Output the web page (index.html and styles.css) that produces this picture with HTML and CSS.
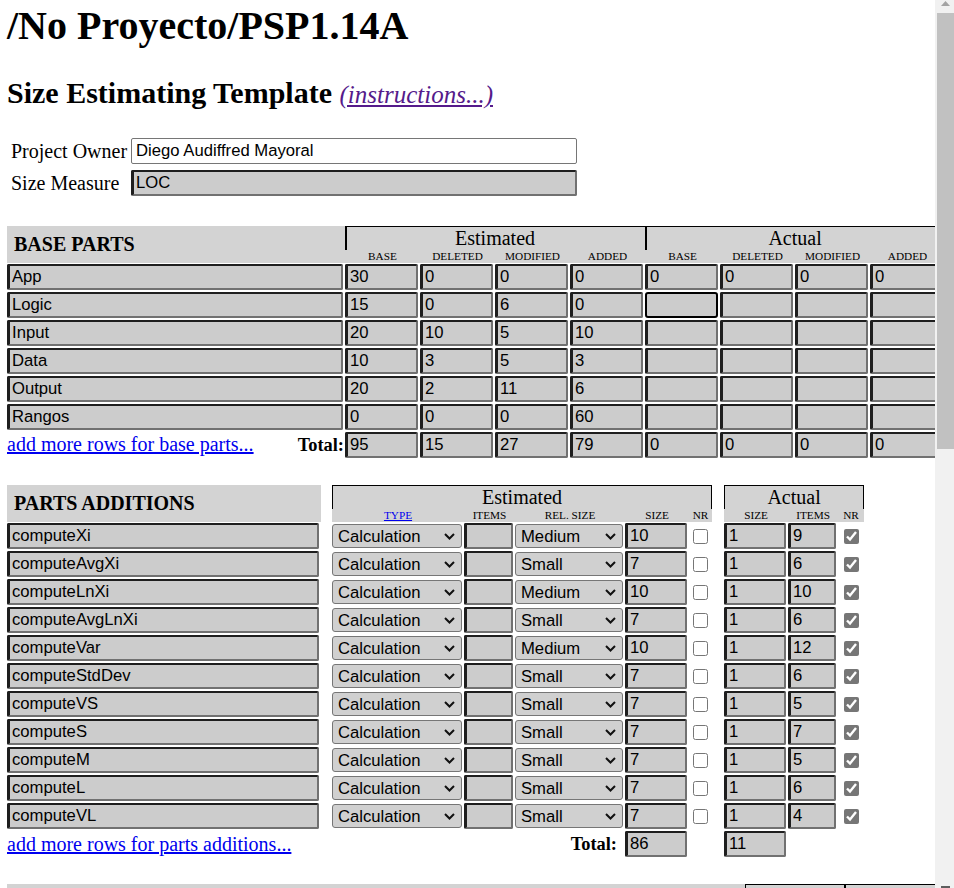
FILE: index.html
```html
<!DOCTYPE html>
<html lang="es">
<head>
<meta charset="utf-8">
<title>Size Estimating Template</title>
<link rel="stylesheet" href="styles.css">
</head>
<body>
<div class="window">
<main class="page">
<h1 class="path">/No Proyecto/PSP1.14A</h1>
<h2 class="tpl">Size Estimating Template <a class="instr" href="#">(instructions...)</a></h2>

<div class="owner-form">
  <label for="owner">Project Owner</label>
  <input id="owner" class="fld edit" type="text" value="Diego Audiffred Mayoral">
  <label for="measure">Size Measure</label>
  <input id="measure" class="fld ro" type="text" value="LOC" readonly>
</div>

<table class="sheet base">
  <colgroup><col class="w-name"><col class="w-num" span="8"></colgroup>
  <thead>
    <tr class="grp-row"><th class="sect" rowspan="2"><span>BASE PARTS</span></th><th class="grp" colspan="4">Estimated</th><th class="grp" colspan="4">Actual</th></tr>
    <tr class="sub"><th>BASE</th><th>DELETED</th><th>MODIFIED</th><th>ADDED</th><th>BASE</th><th>DELETED</th><th>MODIFIED</th><th>ADDED</th></tr>
  </thead>
  <tbody>
    <tr><td><input class="fld ro" value="App" readonly></td><td><input class="fld ro" value="30" readonly></td><td><input class="fld ro" value="0" readonly></td><td><input class="fld ro" value="0" readonly></td><td><input class="fld ro" value="0" readonly></td><td><input class="fld ro" value="0" readonly></td><td><input class="fld ro" value="0" readonly></td><td><input class="fld ro" value="0" readonly></td><td><input class="fld ro" value="0" readonly></td></tr>
    <tr><td><input class="fld ro" value="Logic" readonly></td><td><input class="fld ro" value="15" readonly></td><td><input class="fld ro" value="0" readonly></td><td><input class="fld ro" value="6" readonly></td><td><input class="fld ro" value="0" readonly></td><td><input class="fld ro focus" value="" readonly></td><td><input class="fld ro" value="" readonly></td><td><input class="fld ro" value="" readonly></td><td><input class="fld ro" value="" readonly></td></tr>
    <tr><td><input class="fld ro" value="Input" readonly></td><td><input class="fld ro" value="20" readonly></td><td><input class="fld ro" value="10" readonly></td><td><input class="fld ro" value="5" readonly></td><td><input class="fld ro" value="10" readonly></td><td><input class="fld ro" value="" readonly></td><td><input class="fld ro" value="" readonly></td><td><input class="fld ro" value="" readonly></td><td><input class="fld ro" value="" readonly></td></tr>
    <tr><td><input class="fld ro" value="Data" readonly></td><td><input class="fld ro" value="10" readonly></td><td><input class="fld ro" value="3" readonly></td><td><input class="fld ro" value="5" readonly></td><td><input class="fld ro" value="3" readonly></td><td><input class="fld ro" value="" readonly></td><td><input class="fld ro" value="" readonly></td><td><input class="fld ro" value="" readonly></td><td><input class="fld ro" value="" readonly></td></tr>
    <tr><td><input class="fld ro" value="Output" readonly></td><td><input class="fld ro" value="20" readonly></td><td><input class="fld ro" value="2" readonly></td><td><input class="fld ro" value="11" readonly></td><td><input class="fld ro" value="6" readonly></td><td><input class="fld ro" value="" readonly></td><td><input class="fld ro" value="" readonly></td><td><input class="fld ro" value="" readonly></td><td><input class="fld ro" value="" readonly></td></tr>
    <tr><td><input class="fld ro" value="Rangos" readonly></td><td><input class="fld ro" value="0" readonly></td><td><input class="fld ro" value="0" readonly></td><td><input class="fld ro" value="0" readonly></td><td><input class="fld ro" value="60" readonly></td><td><input class="fld ro" value="" readonly></td><td><input class="fld ro" value="" readonly></td><td><input class="fld ro" value="" readonly></td><td><input class="fld ro" value="" readonly></td></tr>
    <tr><td><div class="tot"><a class="add" href="#">add more rows for base parts...</a><b class="total">Total:</b></div></td><td><input class="fld ro" value="95" readonly></td><td><input class="fld ro" value="15" readonly></td><td><input class="fld ro" value="27" readonly></td><td><input class="fld ro" value="79" readonly></td><td><input class="fld ro" value="0" readonly></td><td><input class="fld ro" value="0" readonly></td><td><input class="fld ro" value="0" readonly></td><td><input class="fld ro" value="0" readonly></td></tr>
  </tbody>
</table>

<table class="sheet adds">
  <colgroup><col class="w-pname"><col class="w-gap"><col class="w-type"><col class="w-items"><col class="w-rel"><col class="w-size"><col class="w-nr"><col class="w-gap2"><col class="w-asize"><col class="w-aitems"><col class="w-anr"></colgroup>
  <thead>
    <tr class="grp-row"><th class="sect" rowspan="2"><span>PARTS ADDITIONS</span></th><th class="gap" rowspan="2"></th><th class="grp thin" colspan="5">Estimated</th><th class="gap" rowspan="2"></th><th class="grp thin" colspan="3">Actual</th></tr>
    <tr class="sub"><th><a class="typelink" href="#">TYPE</a></th><th>ITEMS</th><th>REL. SIZE</th><th>SIZE</th><th>NR</th><th>SIZE</th><th>ITEMS</th><th>NR</th></tr>
  </thead>
  <tbody>
    <tr><td><input class="fld ro" value="computeXi" readonly></td><td></td><td><div class="pick"><select><option selected>Calculation</option><option>Data</option><option>I/O</option><option>Logic</option></select><svg class="chev" viewBox="0 0 11 7" width="11" height="7"><path d="M1 1l4.5 4.5L10 1"/></svg></div></td><td><input class="fld ro" value="" readonly></td><td><div class="pick"><select><option>Small</option><option selected>Medium</option><option>Large</option></select><svg class="chev" viewBox="0 0 11 7" width="11" height="7"><path d="M1 1l4.5 4.5L10 1"/></svg></div></td><td><input class="fld ro" value="10" readonly></td><td><input class="nr" type="checkbox"></td><td></td><td><input class="fld ro" value="1" readonly></td><td><input class="fld ro" value="9" readonly></td><td><input class="nr" type="checkbox" checked></td></tr>
    <tr><td><input class="fld ro" value="computeAvgXi" readonly></td><td></td><td><div class="pick"><select><option selected>Calculation</option><option>Data</option><option>I/O</option><option>Logic</option></select><svg class="chev" viewBox="0 0 11 7" width="11" height="7"><path d="M1 1l4.5 4.5L10 1"/></svg></div></td><td><input class="fld ro" value="" readonly></td><td><div class="pick"><select><option selected>Small</option><option>Medium</option><option>Large</option></select><svg class="chev" viewBox="0 0 11 7" width="11" height="7"><path d="M1 1l4.5 4.5L10 1"/></svg></div></td><td><input class="fld ro" value="7" readonly></td><td><input class="nr" type="checkbox"></td><td></td><td><input class="fld ro" value="1" readonly></td><td><input class="fld ro" value="6" readonly></td><td><input class="nr" type="checkbox" checked></td></tr>
    <tr><td><input class="fld ro" value="computeLnXi" readonly></td><td></td><td><div class="pick"><select><option selected>Calculation</option><option>Data</option><option>I/O</option><option>Logic</option></select><svg class="chev" viewBox="0 0 11 7" width="11" height="7"><path d="M1 1l4.5 4.5L10 1"/></svg></div></td><td><input class="fld ro" value="" readonly></td><td><div class="pick"><select><option>Small</option><option selected>Medium</option><option>Large</option></select><svg class="chev" viewBox="0 0 11 7" width="11" height="7"><path d="M1 1l4.5 4.5L10 1"/></svg></div></td><td><input class="fld ro" value="10" readonly></td><td><input class="nr" type="checkbox"></td><td></td><td><input class="fld ro" value="1" readonly></td><td><input class="fld ro" value="10" readonly></td><td><input class="nr" type="checkbox" checked></td></tr>
    <tr><td><input class="fld ro" value="computeAvgLnXi" readonly></td><td></td><td><div class="pick"><select><option selected>Calculation</option><option>Data</option><option>I/O</option><option>Logic</option></select><svg class="chev" viewBox="0 0 11 7" width="11" height="7"><path d="M1 1l4.5 4.5L10 1"/></svg></div></td><td><input class="fld ro" value="" readonly></td><td><div class="pick"><select><option selected>Small</option><option>Medium</option><option>Large</option></select><svg class="chev" viewBox="0 0 11 7" width="11" height="7"><path d="M1 1l4.5 4.5L10 1"/></svg></div></td><td><input class="fld ro" value="7" readonly></td><td><input class="nr" type="checkbox"></td><td></td><td><input class="fld ro" value="1" readonly></td><td><input class="fld ro" value="6" readonly></td><td><input class="nr" type="checkbox" checked></td></tr>
    <tr><td><input class="fld ro" value="computeVar" readonly></td><td></td><td><div class="pick"><select><option selected>Calculation</option><option>Data</option><option>I/O</option><option>Logic</option></select><svg class="chev" viewBox="0 0 11 7" width="11" height="7"><path d="M1 1l4.5 4.5L10 1"/></svg></div></td><td><input class="fld ro" value="" readonly></td><td><div class="pick"><select><option>Small</option><option selected>Medium</option><option>Large</option></select><svg class="chev" viewBox="0 0 11 7" width="11" height="7"><path d="M1 1l4.5 4.5L10 1"/></svg></div></td><td><input class="fld ro" value="10" readonly></td><td><input class="nr" type="checkbox"></td><td></td><td><input class="fld ro" value="1" readonly></td><td><input class="fld ro" value="12" readonly></td><td><input class="nr" type="checkbox" checked></td></tr>
    <tr><td><input class="fld ro" value="computeStdDev" readonly></td><td></td><td><div class="pick"><select><option selected>Calculation</option><option>Data</option><option>I/O</option><option>Logic</option></select><svg class="chev" viewBox="0 0 11 7" width="11" height="7"><path d="M1 1l4.5 4.5L10 1"/></svg></div></td><td><input class="fld ro" value="" readonly></td><td><div class="pick"><select><option selected>Small</option><option>Medium</option><option>Large</option></select><svg class="chev" viewBox="0 0 11 7" width="11" height="7"><path d="M1 1l4.5 4.5L10 1"/></svg></div></td><td><input class="fld ro" value="7" readonly></td><td><input class="nr" type="checkbox"></td><td></td><td><input class="fld ro" value="1" readonly></td><td><input class="fld ro" value="6" readonly></td><td><input class="nr" type="checkbox" checked></td></tr>
    <tr><td><input class="fld ro" value="computeVS" readonly></td><td></td><td><div class="pick"><select><option selected>Calculation</option><option>Data</option><option>I/O</option><option>Logic</option></select><svg class="chev" viewBox="0 0 11 7" width="11" height="7"><path d="M1 1l4.5 4.5L10 1"/></svg></div></td><td><input class="fld ro" value="" readonly></td><td><div class="pick"><select><option selected>Small</option><option>Medium</option><option>Large</option></select><svg class="chev" viewBox="0 0 11 7" width="11" height="7"><path d="M1 1l4.5 4.5L10 1"/></svg></div></td><td><input class="fld ro" value="7" readonly></td><td><input class="nr" type="checkbox"></td><td></td><td><input class="fld ro" value="1" readonly></td><td><input class="fld ro" value="5" readonly></td><td><input class="nr" type="checkbox" checked></td></tr>
    <tr><td><input class="fld ro" value="computeS" readonly></td><td></td><td><div class="pick"><select><option selected>Calculation</option><option>Data</option><option>I/O</option><option>Logic</option></select><svg class="chev" viewBox="0 0 11 7" width="11" height="7"><path d="M1 1l4.5 4.5L10 1"/></svg></div></td><td><input class="fld ro" value="" readonly></td><td><div class="pick"><select><option selected>Small</option><option>Medium</option><option>Large</option></select><svg class="chev" viewBox="0 0 11 7" width="11" height="7"><path d="M1 1l4.5 4.5L10 1"/></svg></div></td><td><input class="fld ro" value="7" readonly></td><td><input class="nr" type="checkbox"></td><td></td><td><input class="fld ro" value="1" readonly></td><td><input class="fld ro" value="7" readonly></td><td><input class="nr" type="checkbox" checked></td></tr>
    <tr><td><input class="fld ro" value="computeM" readonly></td><td></td><td><div class="pick"><select><option selected>Calculation</option><option>Data</option><option>I/O</option><option>Logic</option></select><svg class="chev" viewBox="0 0 11 7" width="11" height="7"><path d="M1 1l4.5 4.5L10 1"/></svg></div></td><td><input class="fld ro" value="" readonly></td><td><div class="pick"><select><option selected>Small</option><option>Medium</option><option>Large</option></select><svg class="chev" viewBox="0 0 11 7" width="11" height="7"><path d="M1 1l4.5 4.5L10 1"/></svg></div></td><td><input class="fld ro" value="7" readonly></td><td><input class="nr" type="checkbox"></td><td></td><td><input class="fld ro" value="1" readonly></td><td><input class="fld ro" value="5" readonly></td><td><input class="nr" type="checkbox" checked></td></tr>
    <tr><td><input class="fld ro" value="computeL" readonly></td><td></td><td><div class="pick"><select><option selected>Calculation</option><option>Data</option><option>I/O</option><option>Logic</option></select><svg class="chev" viewBox="0 0 11 7" width="11" height="7"><path d="M1 1l4.5 4.5L10 1"/></svg></div></td><td><input class="fld ro" value="" readonly></td><td><div class="pick"><select><option selected>Small</option><option>Medium</option><option>Large</option></select><svg class="chev" viewBox="0 0 11 7" width="11" height="7"><path d="M1 1l4.5 4.5L10 1"/></svg></div></td><td><input class="fld ro" value="7" readonly></td><td><input class="nr" type="checkbox"></td><td></td><td><input class="fld ro" value="1" readonly></td><td><input class="fld ro" value="6" readonly></td><td><input class="nr" type="checkbox" checked></td></tr>
    <tr><td><input class="fld ro" value="computeVL" readonly></td><td></td><td><div class="pick"><select><option selected>Calculation</option><option>Data</option><option>I/O</option><option>Logic</option></select><svg class="chev" viewBox="0 0 11 7" width="11" height="7"><path d="M1 1l4.5 4.5L10 1"/></svg></div></td><td><input class="fld ro" value="" readonly></td><td><div class="pick"><select><option selected>Small</option><option>Medium</option><option>Large</option></select><svg class="chev" viewBox="0 0 11 7" width="11" height="7"><path d="M1 1l4.5 4.5L10 1"/></svg></div></td><td><input class="fld ro" value="7" readonly></td><td><input class="nr" type="checkbox"></td><td></td><td><input class="fld ro" value="1" readonly></td><td><input class="fld ro" value="4" readonly></td><td><input class="nr" type="checkbox" checked></td></tr>
    <tr><td><div class="tot"><a class="add" href="#">add more rows for parts additions...</a></div></td><td></td><td class="tot-label" colspan="3"><b class="total">Total:</b></td><td><input class="fld ro" value="86" readonly></td><td></td><td></td><td><input class="fld ro" value="11" readonly></td><td></td><td></td></tr>
  </tbody>
</table>

<table class="sheet reused" aria-hidden="true">
  <colgroup><col class="w-rname"><col class="w-rcol" span="2"></colgroup>
  <thead>
    <tr class="grp-row"><th class="sect" rowspan="2"></th><th class="grp thin"></th><th class="grp thin"></th></tr>
    <tr class="sub"><th></th><th></th></tr>
  </thead>
</table>
</main>
<div class="scrollbar" aria-hidden="true">
  <div class="sb-up"><svg width="9" height="5" viewBox="0 0 9 5"><polygon points="4.5,0 9,5 0,5" fill="#a3a3a3"/></svg></div>
  <div class="sb-thumb"></div>
  <div class="sb-fill"></div>
  <div class="sb-down"></div>
</div>
</div>
</body>
</html>
```

FILE: styles.css
```css
html, body {
  margin: 0;
  height: 100%;
  overflow: hidden;
  background: #fff;
}
body {
  font-family: "Liberation Serif", "Times New Roman", serif;
  font-size: 20px;
  color: #000;
}
.window {
  display: flex;
  height: 100vh;
}
.page {
  flex: 1 1 auto;
  min-width: 0;
  overflow: hidden;
  padding-left: 7px;
}

/* fake classic scrollbar */
.scrollbar {
  flex: 0 0 19px;
  background: #f1f1f1;
  display: flex;
  flex-direction: column;
}
.sb-up {
  height: 13px;
  display: flex;
  justify-content: center;
  padding: 1px 0 0 2px;
  box-sizing: border-box;
}
.sb-up svg { display: block; }
.sb-thumb {
  height: 436px;
  margin-left: 2px;
  background: #c1c1c1;
}
.sb-fill { flex: 1; }
.sb-down {
  height: 2px;
  margin: 0 4px 0 6px;
  background: #5e5e5e;
}

/* headings */
.path {
  margin: 3px 0 0;
  font-size: 40px;
  line-height: 46px;
  font-weight: bold;
}
.tpl {
  margin: 26px 0 0;
  font-size: 30px;
  line-height: 35px;
  font-weight: bold;
}
.instr {
  font-size: 25px;
  line-height: 1;
  font-style: italic;
  font-weight: normal;
  color: #551a8b;
}

/* owner form */
.owner-form {
  display: grid;
  grid-template-columns: max-content 446px;
  column-gap: 4px;
  row-gap: 6px;
  align-items: center;
  margin: 28px 0 0 4px;
}
.owner-form label { line-height: 23px; }

/* fields */
.fld {
  display: block;
  box-sizing: border-box;
  height: 26px;
  margin: 0;
  padding: 0 2px;
  font: 16.67px "Liberation Sans", Arial, sans-serif;
  color: #000;
  outline: none;
}
.fld.edit {
  background: #fff;
  border: 1px solid #767676;
  border-radius: 2px;
  padding: 0 4px;
}
.fld.ro {
  background: #cccccc;
  border-style: solid;
  border-width: 2px 2px 2px 3px;
  border-color: #1e1e1e #717171 #717171 #1e1e1e;
  border-radius: 2px;
}
.fld.ro.focus {
  border-width: 2px;
  border-color: #000;
  border-radius: 3px;
}

/* sheets */
.sheet {
  border-collapse: separate;
  border-spacing: 0;
  table-layout: fixed;
}
.sheet th, .sheet td { padding: 0; }
.sheet thead th {
  background: #d3d3d3;
  font-weight: normal;
}
.sheet thead th.gap { background: transparent; }
.sheet td .fld {
  width: calc(100% - 2px);
  margin: 1px 2px 1px 0;
}
.sect {
  text-align: left;
  vertical-align: middle;
}
.sect span {
  padding-left: 7px;
  font-weight: bold;
  font-size: 20px;
  line-height: 23px;
}
.grp-row th.grp {
  height: 24px;
  font-size: 20px;
  line-height: 23px;
  vertical-align: middle;
  box-shadow: inset 2px 1px 0 #000;
}
.grp-row th.grp.thin {
  box-shadow: inset 1px 1px 0 #000, inset -1px 0 0 #000;
}
.sub th {
  height: 13px;
  font-size: 11.25px;
  line-height: 12px;
  vertical-align: top;
}
.typelink { color: #0000ee; }

.base { width: 938px; margin-top: 30px; }
.w-name { width: 338px; }
.w-num { width: 75px; }

.adds { width: 857px; margin-top: 26px; }
.w-pname { width: 314px; }
.w-gap { width: 11px; }
.w-type { width: 132px; }
.w-items { width: 51px; }
.w-rel { width: 110px; }
.w-size { width: 64px; }
.w-nr { width: 23px; }
.w-gap2 { width: 12px; }
.w-asize { width: 64px; }
.w-aitems { width: 50px; }
.w-anr { width: 26px; }

.reused { width: 938px; margin-top: 26px; }
.w-rname { width: 738px; }
.w-rcol { width: 100px; }

/* totals row */
.tot {
  display: flex;
  justify-content: space-between;
  align-items: baseline;
  padding-right: 1px;
  line-height: 23px;
}
.add { color: #0000ee; font-size: 20px; }
.total { font-size: 18.4px; font-weight: bold; }
.tot-label {
  text-align: right;
  padding-right: 8px !important;
  line-height: 23px;
}

/* selects */
.pick {
  display: flex;
  align-items: center;
  box-sizing: border-box;
  width: calc(100% - 2px);
  height: 24px;
  margin: 2px 2px 2px 0;
  background: #d0d0d0;
  border: 1px solid #767676;
  border-radius: 3px;
}
.pick select {
  flex: 1 1 auto;
  min-width: 0;
  height: 100%;
  margin: 0;
  padding: 0 0 0 5px;
  border: 0;
  background: transparent;
  appearance: none;
  -webkit-appearance: none;
  font: 16.67px "Liberation Sans", Arial, sans-serif;
  color: #000;
  outline: none;
}
.chev {
  flex: none;
  display: block;
  margin-right: 6px;
  fill: none;
  stroke: #111;
  stroke-width: 2;
}

/* checkboxes */
.nr {
  display: block;
  width: 15px;
  height: 15px;
  margin: 0 auto;
  accent-color: #767676;
}
```
